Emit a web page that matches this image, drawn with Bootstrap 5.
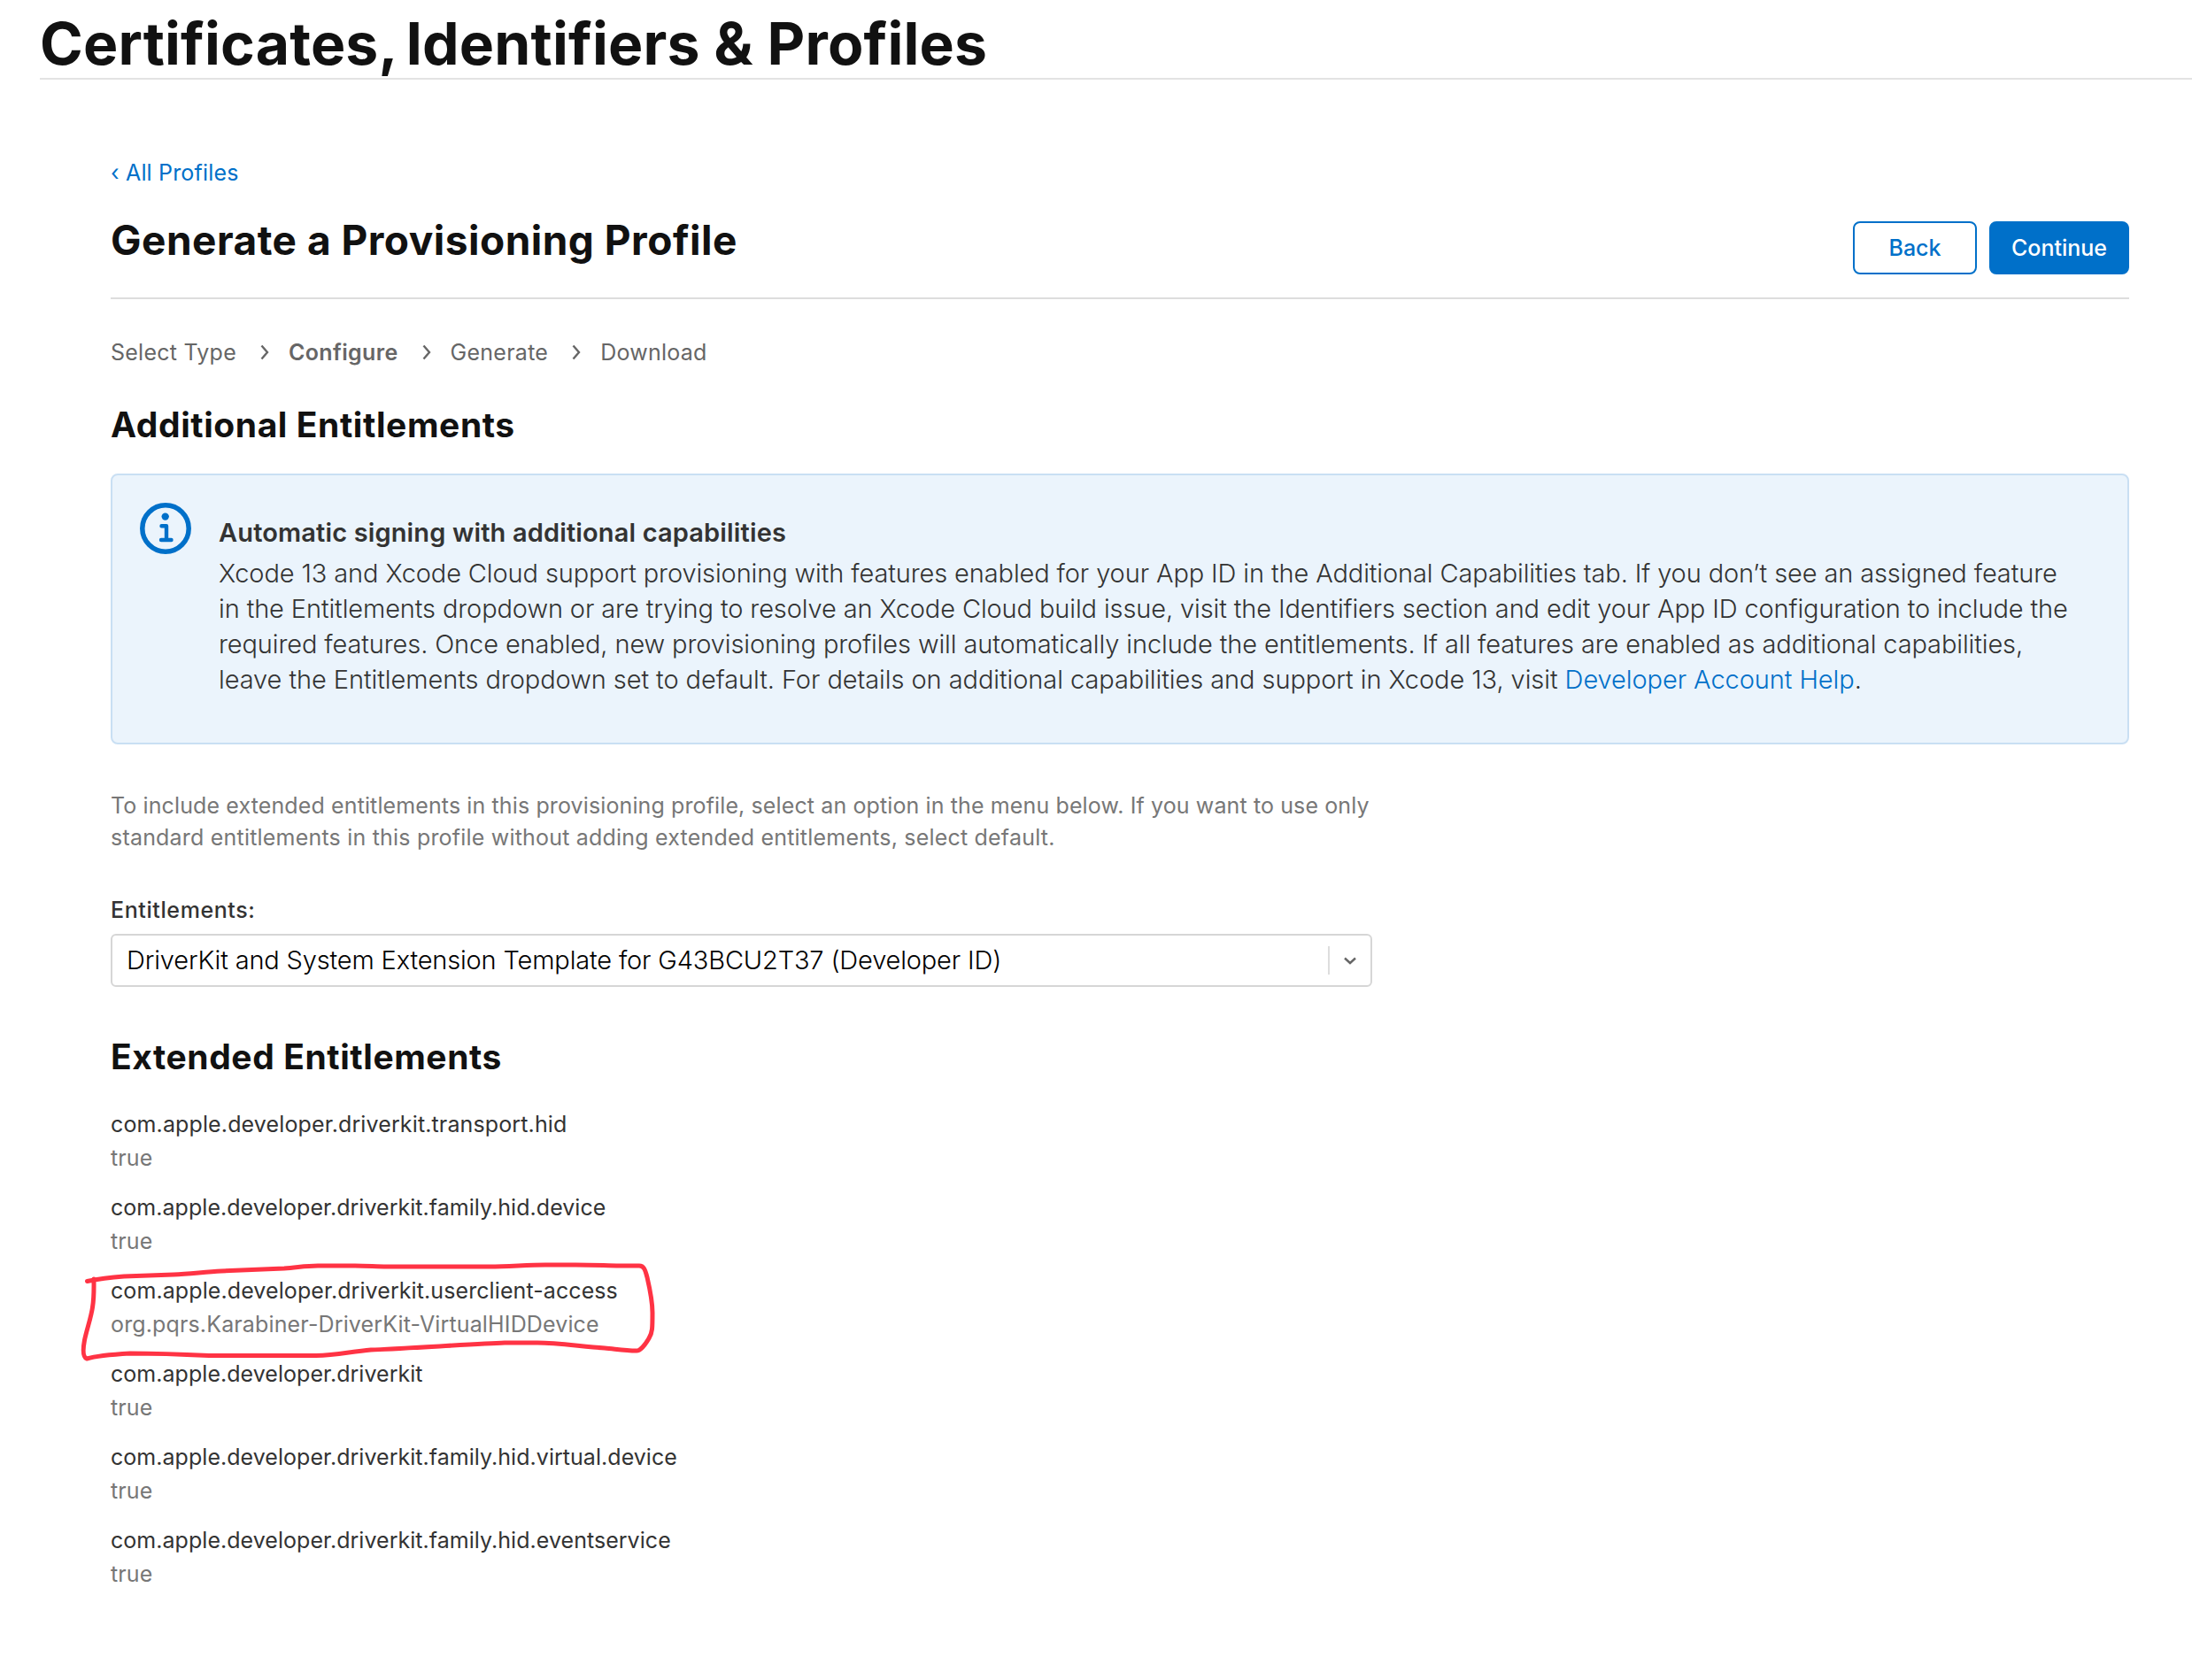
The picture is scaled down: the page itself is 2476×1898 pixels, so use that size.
<!DOCTYPE html>
<html lang="en">
<head>
<meta charset="utf-8">
<title>Certificates, Identifiers &amp; Profiles</title>
<link href="https://cdn.jsdelivr.net/npm/bootstrap@5.3.0/dist/css/bootstrap.min.css" rel="stylesheet">
<style>
body{font-family:Inter,"Liberation Sans",sans-serif;font-size:25px;line-height:36px;color:#333;background:#fff;overflow-x:hidden}
a{color:#0070c9;text-decoration:none}
.page-head{margin-left:45px;padding-top:10px;border-bottom:2px solid #e3e3e3}
.page-head h1{font-size:66px;line-height:78px;font-weight:700;color:#111;letter-spacing:.15px}
.page-head h1 span{margin-right:-7px}
.page-main{margin-left:125px;width:2280px;padding-top:87px}
.back-link{letter-spacing:.17px}
.title-row{margin-top:28px;height:97px;border-bottom:2px solid #ddd}
.title-row h2{font-size:46px;line-height:60px;font-weight:700;color:#111;letter-spacing:.49px}
.action-set{gap:14px;padding-top:9px}
.action-set .btn{height:60px;padding:0;border:2px solid #0070c9;border-radius:8px;font-size:25px;font-weight:500;line-height:53px}
.btn-back{width:140px;color:#0070c9;background:#fff}
.btn-next{width:158px;color:#fff;background:#0070c9}
.steps{margin-top:42px;color:#666;letter-spacing:.25px}
.steps .fw-semibold{letter-spacing:.35px}
.steps svg{margin:0 22px 0 27px}
.section-title{font-size:39px;line-height:48px;font-weight:700;color:#111;letter-spacing:.58px}
.intro-title{margin-top:40px}
.list-title{margin-top:55px;margin-bottom:33px}
.notice{margin-top:31px;height:306px;padding:31px 40px 0 31px;background:#ebf4fc;border:2px solid #c9dff3;border-radius:8px}
.notice-text{margin-left:31px;padding-top:13.5px;font-size:29px;line-height:40px;font-weight:300;white-space:nowrap;letter-spacing:-.12px}
.notice-text strong{font-weight:600;margin-bottom:6px;letter-spacing:.14px}
.last-line{letter-spacing:-.076px}
.hint{margin-top:51px;color:#777;letter-spacing:.117px}
.hint .last-line{letter-spacing:.2px}
.field-label{margin-top:46px;font-weight:500;letter-spacing:.6px}
.picker{height:60px;width:1425px;margin-top:9px;border:2px solid #d6d6d6;border-radius:6px;color:#000;font-size:29px;font-weight:300;padding:0 16px;letter-spacing:-.16px}
.picker .divide{width:2px;height:32px;background:#ddd;margin-right:16px}
.ent{line-height:38px;margin-bottom:18px;letter-spacing:.04px}
.ent:first-child{letter-spacing:.13px}
.ent dd{color:#777;letter-spacing:.14px}
.ent dt{font-weight:400}
.ent.marked dt{letter-spacing:.09px}
.scribble{left:-40px;top:-35px;pointer-events:none}
</style>
</head>
<body>
<header class="page-head"><h1 class="m-0"><span>Certificates,</span> Identifiers &amp; Profiles</h1></header>
<main class="page-main">
  <a href="#" class="back-link d-block">‹ All Profiles</a>
  <div class="title-row d-flex justify-content-between">
    <h2 class="m-0">Generate a Provisioning Profile</h2>
    <div class="action-set d-flex">
      <button class="btn btn-back">Back</button>
      <button class="btn btn-next">Continue</button>
    </div>
  </div>
  <nav class="steps d-flex align-items-center">
    <span>Select Type</span>
    <svg width="10" height="18" viewBox="0 0 10 18" fill="none" stroke="#666" stroke-width="2.4"><path d="M1.5 1.5 8 9l-6.500 7.500"/></svg>
    <span class="fw-semibold">Configure</span>
    <svg width="10" height="18" viewBox="0 0 10 18" fill="none" stroke="#666" stroke-width="2.4"><path d="M1.5 1.5 8 9l-6.500 7.500"/></svg>
    <span>Generate</span>
    <svg width="10" height="18" viewBox="0 0 10 18" fill="none" stroke="#666" stroke-width="2.4"><path d="M1.5 1.5 8 9l-6.500 7.500"/></svg>
    <span>Download</span>
  </nav>
  <h3 class="section-title intro-title mb-0">Additional Entitlements</h3>
  <section class="notice d-flex align-items-start">
    <svg class="flex-shrink-0" width="58" height="58" viewBox="0 0 58 58" fill="none" stroke="#0070c9"><circle cx="29" cy="29" r="26.200" stroke-width="5.500"/><circle cx="28.700" cy="15.600" r="4.200" fill="#0070c9" stroke="none"/><path d="M24.500 26.200h5.500V42M24 42h11.500" stroke-width="4.400" stroke-linecap="round" stroke-linejoin="round"/></svg>
    <div class="notice-text">
      <strong class="d-block">Automatic signing with additional capabilities</strong>
      Xcode 13 and Xcode Cloud support provisioning with features enabled for your App ID in the Additional Capabilities tab. If you don’t see an assigned feature<br>
      in the Entitlements dropdown or are trying to resolve an Xcode Cloud build issue, visit the Identifiers section and edit your App ID configuration to include the<br>
      required features. Once enabled, new provisioning profiles will automatically include the entitlements. If all features are enabled as additional capabilities,<br>
      <span class="last-line">leave the Entitlements dropdown set to default. For details on additional capabilities and support in Xcode 13, visit <a href="#">Developer Account Help</a>.</span>
    </div>
  </section>
  <p class="hint mb-0">To include extended entitlements in this provisioning profile, select an option in the menu below. If you want to use only<br><span class="last-line">standard entitlements in this profile without adding extended entitlements, select default.</span></p>
  <div class="field-label">Entitlements:</div>
  <div class="picker d-flex align-items-center">
    <span class="me-auto">DriverKit and System Extension Template for G43BCU2T37 (Developer ID)</span>
    <span class="divide"></span>
    <svg width="14" height="9" viewBox="0 0 14 9" fill="none" stroke="#666" stroke-width="2.400"><path d="M1 1.500l6 5.500 6-5.500"/></svg>
  </div>
  <h3 class="section-title list-title">Extended Entitlements</h3>
  <dl class="m-0">
    <div class="ent"><dt>com.apple.developer.driverkit.transport.hid</dt><dd class="m-0">true</dd></div>
    <div class="ent"><dt>com.apple.developer.driverkit.family.hid.device</dt><dd class="m-0">true</dd></div>
    <div class="ent marked position-relative"><dt>com.apple.developer.driverkit.userclient-access</dt><dd class="m-0">org.pqrs.Karabiner-DriverKit-VirtualHIDDevice</dd>
      <svg class="scribble position-absolute" width="680" height="140" viewBox="85 1404 680 140" fill="none" stroke="#ff3344" stroke-width="5" stroke-linecap="round" stroke-linejoin="round"><path d="M98.500 1447.500C110 1445 125 1443 140 1442L196 1440C215 1439 232 1437 250 1436L321 1433C336 1432 345 1430 359 1430H401C415 1430 425 1431 437 1431H553C575 1431 595 1429 616 1429H650C675 1429 685 1430 700 1430H722C728 1430 729 1436 731 1443C734 1456 737 1470 737 1483C737 1500 737 1506 733 1512C729 1519 723 1526 719 1526C705 1526 695 1524 683 1523C655 1521 630 1517 607 1517H570C540 1518 450 1524 419 1525C396 1527 380 1531 357 1531.500H236C205 1530 180 1529 147 1529C130 1530 108 1532 98 1535C93 1533 94 1522 95.500 1514C98 1502 103 1488 104.500 1477C106.500 1465 106 1455 106 1445"/></svg>
    </div>
    <div class="ent"><dt>com.apple.developer.driverkit</dt><dd class="m-0">true</dd></div>
    <div class="ent"><dt>com.apple.developer.driverkit.family.hid.virtual.device</dt><dd class="m-0">true</dd></div>
    <div class="ent mb-0"><dt>com.apple.developer.driverkit.family.hid.eventservice</dt><dd class="m-0">true</dd></div>
  </dl>
</main>
<script src="https://cdn.jsdelivr.net/npm/bootstrap@5.3.0/dist/js/bootstrap.bundle.min.js"></script>
</body>
</html>
